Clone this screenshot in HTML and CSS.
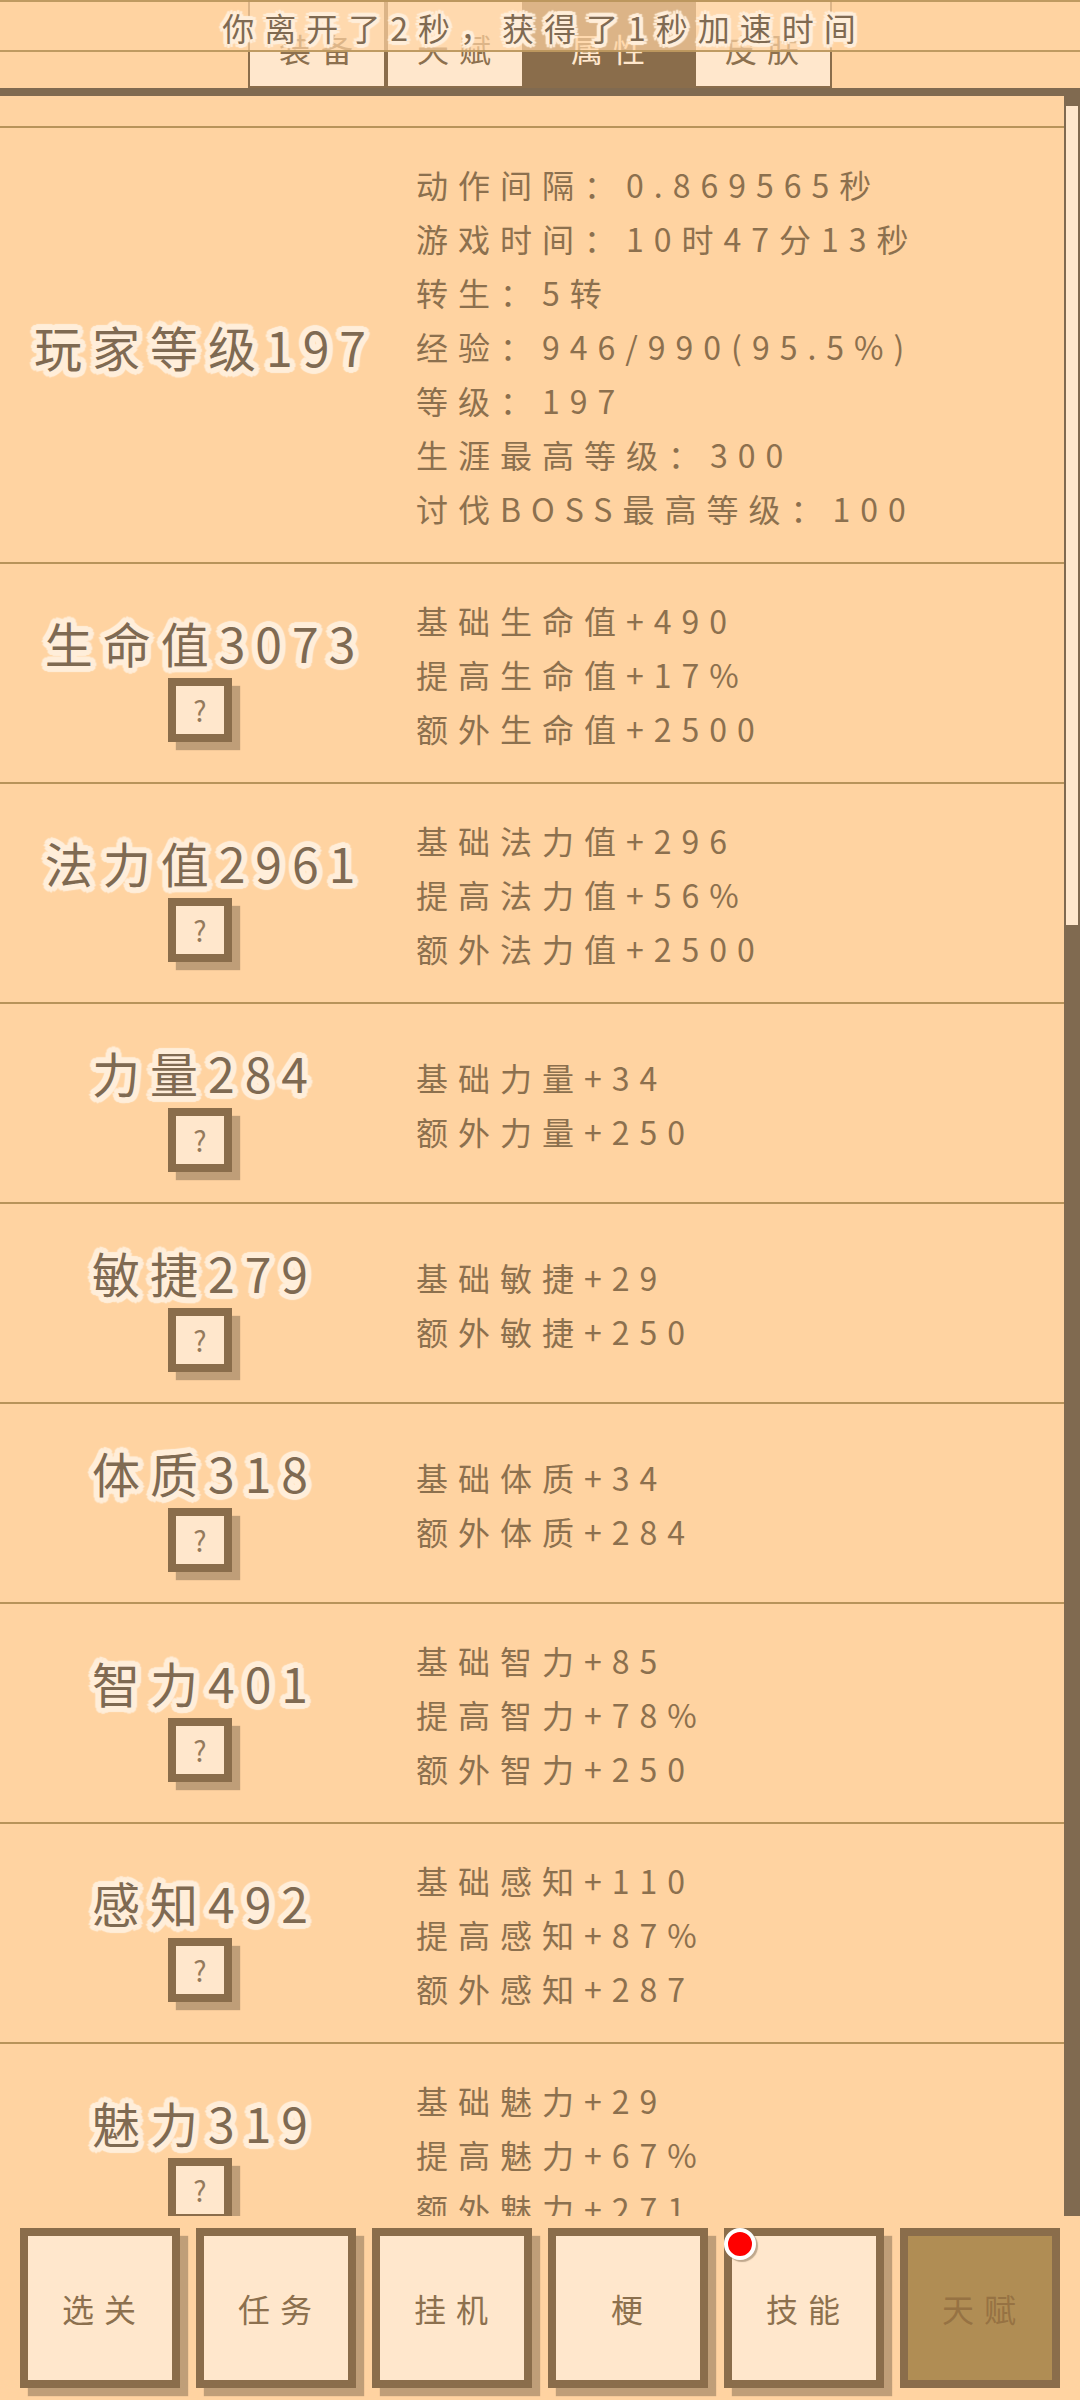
FILE: index.html
```html
<!DOCTYPE html>
<html lang="zh-CN">
<head>
<meta charset="utf-8">
<title>属性</title>
<link rel="stylesheet" href="styles.css">
</head>
<body>
<div class="app">
  <div class="toast">你离开了2秒，获得了1秒加速时间</div>

  <nav class="tabs">
    <div class="tab">装备</div>
    <div class="tab">天赋</div>
    <div class="tab tab-active">属性</div>
    <div class="tab">皮肤</div>
  </nav>

  <main class="panel">
    <div class="list">
      <div class="spacer"></div>

      <section class="row">
        <div class="head"><div class="title title-solo">玩家等级197</div></div>
        <div class="lines">
          <div>动作间隔：0.869565秒</div>
          <div>游戏时间：10时47分13秒</div>
          <div>转生：5转</div>
          <div>经验：946/990(95.5%)</div>
          <div>等级：197</div>
          <div>生涯最高等级：300</div>
          <div>讨伐BOSS最高等级：100</div>
        </div>
      </section>

      <section class="row">
        <div class="head"><div class="title">生命值3073</div><div class="help">?</div></div>
        <div class="lines">
          <div>基础生命值+490</div>
          <div>提高生命值+17%</div>
          <div>额外生命值+2500</div>
        </div>
      </section>

      <section class="row">
        <div class="head"><div class="title">法力值2961</div><div class="help">?</div></div>
        <div class="lines">
          <div>基础法力值+296</div>
          <div>提高法力值+56%</div>
          <div>额外法力值+2500</div>
        </div>
      </section>

      <section class="row">
        <div class="head"><div class="title">力量284</div><div class="help">?</div></div>
        <div class="lines">
          <div>基础力量+34</div>
          <div>额外力量+250</div>
        </div>
      </section>

      <section class="row">
        <div class="head"><div class="title">敏捷279</div><div class="help">?</div></div>
        <div class="lines">
          <div>基础敏捷+29</div>
          <div>额外敏捷+250</div>
        </div>
      </section>

      <section class="row">
        <div class="head"><div class="title">体质318</div><div class="help">?</div></div>
        <div class="lines">
          <div>基础体质+34</div>
          <div>额外体质+284</div>
        </div>
      </section>

      <section class="row">
        <div class="head"><div class="title">智力401</div><div class="help">?</div></div>
        <div class="lines">
          <div>基础智力+85</div>
          <div>提高智力+78%</div>
          <div>额外智力+250</div>
        </div>
      </section>

      <section class="row">
        <div class="head"><div class="title">感知492</div><div class="help">?</div></div>
        <div class="lines">
          <div>基础感知+110</div>
          <div>提高感知+87%</div>
          <div>额外感知+287</div>
        </div>
      </section>

      <section class="row">
        <div class="head"><div class="title">魅力319</div><div class="help">?</div></div>
        <div class="lines">
          <div>基础魅力+29</div>
          <div>提高魅力+67%</div>
          <div>额外魅力+271</div>
        </div>
      </section>
    </div>

    <div class="scrollbar"><div class="thumb"></div></div>
  </main>

  <footer class="dock">
    <button class="dock-btn">选关</button>
    <button class="dock-btn">任务</button>
    <button class="dock-btn">挂机</button>
    <button class="dock-btn">梗</button>
    <button class="dock-btn">技能<span class="dot"></span></button>
    <button class="dock-btn dock-btn-active">天赋</button>
  </footer>
</div>
</body>
</html>
```

FILE: styles.css
```css
* {
  box-sizing: border-box;
}

html,
body {
  margin: 0;
  padding: 0;
}

body {
  background: #ffd3a1;
  color: #8c704e;
  font-family: "Noto Sans CJK SC", "Noto Sans", sans-serif;
  font-size: 32px;
  letter-spacing: 10px;
}

.app {
  position: relative;
  width: 1080px;
  height: 2400px;
  overflow: hidden;
  display: flex;
  flex-direction: column;
}

/* Notice strip floating over the tab bar */
.toast {
  position: absolute;
  top: 0;
  left: 0;
  right: 0;
  height: 52px;
  padding-left: 8px;
  line-height: 50px;
  text-align: center;
  background: rgba(255, 211, 161, 0.7);
  border-top: 2px solid rgba(184, 147, 90, 0.9);
  border-bottom: 2px solid rgba(184, 147, 90, 0.9);
  color: #7f6a52;
  text-shadow: 4px 0 1px #ffeeda, -4px 0 1px #ffeeda, 0 4px 1px #ffeeda, 0 -4px 1px #ffeeda,
    3px 3px 1px #ffeeda, -3px 3px 1px #ffeeda, 3px -3px 1px #ffeeda, -3px -3px 1px #ffeeda,
    2px 0 1px #ffeeda, -2px 0 1px #ffeeda, 0 2px 1px #ffeeda, 0 -2px 1px #ffeeda;
  z-index: 3;
}

/* Tab bar */
.tabs {
  flex: none;
  height: 88px;
  display: flex;
  justify-content: center;
}

.tab {
  width: 138px;
  height: 88px;
  padding: 26px 0 0 8px;
  line-height: 40px;
  text-align: center;
  background: #ffe7cc;
  border: 2px solid #8a6d4b;
}

.tab-active {
  width: 170px;
  background: #8a6d4b;
  color: #ffe7cc;
}

/* Scrolling content */
.panel {
  flex: none;
  height: 2128px;
  display: flex;
  border-top: 8px solid #806a50;
  overflow: hidden;
}

.list {
  flex: 1;
  min-width: 0;
}

.spacer {
  height: 32px;
  border-bottom: 2px solid #b8935a;
}

.row {
  display: flex;
  align-items: center;
  padding: 29px 0 27px;
  border-bottom: 2px solid #b8935a;
}

.head {
  flex: none;
  width: 416px;
  display: flex;
  flex-direction: column;
  align-items: center;
}

.title {
  height: 75px;
  margin-right: 6px;
  line-height: 79px;
  font-size: 48px;
  color: #7f6a52;
  text-shadow: 6px 0 1px #ffeeda, -6px 0 1px #ffeeda, 0 6px 1px #ffeeda, 0 -6px 1px #ffeeda,
    4px 4px 1px #ffeeda, -4px 4px 1px #ffeeda, 4px -4px 1px #ffeeda, -4px -4px 1px #ffeeda,
    3px 0 1px #ffeeda, -3px 0 1px #ffeeda, 0 3px 1px #ffeeda, 0 -3px 1px #ffeeda,
    5px 3px 1px #ffeeda, -5px 3px 1px #ffeeda, 5px -3px 1px #ffeeda, -5px -3px 1px #ffeeda,
    3px 5px 1px #ffeeda, -3px 5px 1px #ffeeda, 3px -5px 1px #ffeeda, -3px -5px 1px #ffeeda;
}

.title-solo {
  line-height: 75px;
}

.help {
  width: 64px;
  height: 64px;
  margin: 0 16px 3px 0;
  background: #ffe7cc;
  border: 8px solid #8a6d4b;
  box-shadow: 8px 8px 1px rgba(128, 106, 80, 0.5);
  color: #947a5c;
  font-size: 28px;
  line-height: 48px;
  text-align: center;
  letter-spacing: 0;
}

.lines {
  line-height: 54px;
  white-space: nowrap;
}

.scrollbar {
  flex: none;
  width: 16px;
  padding: 10px 2px 0;
  background: #806a50;
}

.thumb {
  height: 819px;
  background: #ffe7cc;
}

/* Bottom navigation */
.dock {
  flex: none;
  display: flex;
  gap: 16px;
  padding: 12px 20px;
}

.dock-btn {
  position: relative;
  flex: none;
  width: 160px;
  height: 160px;
  padding: 0 0 0 8px;
  background: #ffe7cc;
  border: 8px solid #8a6d4b;
  border-radius: 0;
  box-shadow: 8px 8px 1px rgba(128, 106, 80, 0.5);
  color: inherit;
  font: inherit;
  letter-spacing: inherit;
}

.dock-btn-active {
  background: #b08d54;
  box-shadow: none;
  color: #967243;
}

.dot {
  position: absolute;
  top: -8px;
  left: -8px;
  width: 32px;
  height: 32px;
  background: #f00;
  border: 4px solid #fff;
  border-radius: 50%;
  box-shadow: 2px 2px 1px rgba(128, 106, 80, 0.5);
}
```
